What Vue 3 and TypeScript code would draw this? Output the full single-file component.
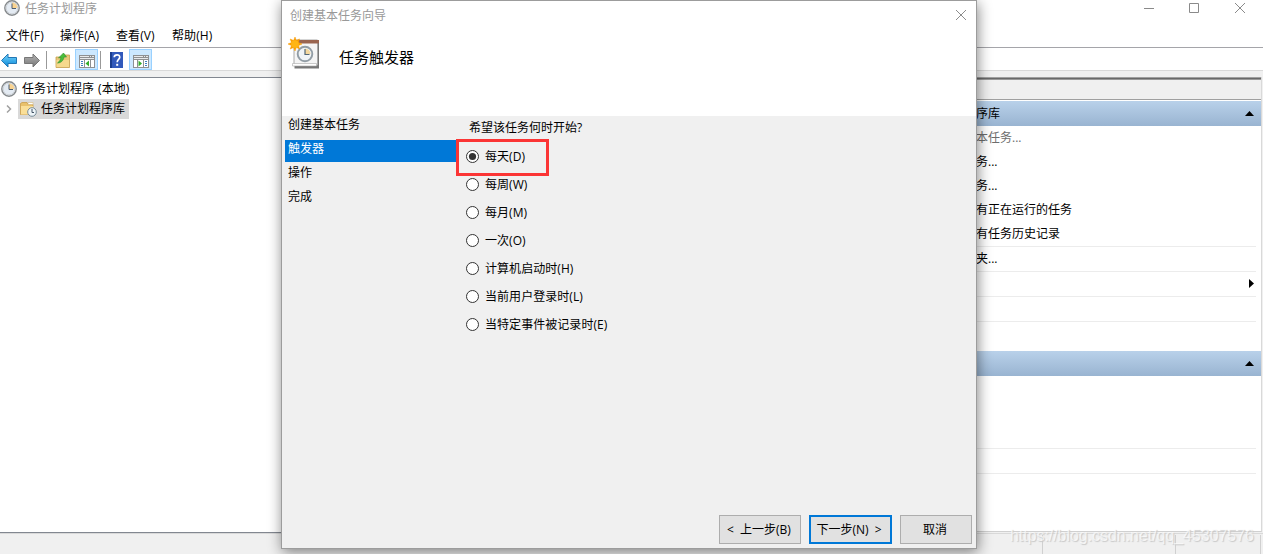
<script setup lang="ts">
import { ref } from 'vue'

interface ActionRow {
  text: string
  dim?: boolean
  line?: boolean
  arrow?: boolean
}

const menus: string[] = ['文件(F)', '操作(A)', '查看(V)', '帮助(H)']
const actions: ActionRow[] = [
  { text: '本任务...', dim: true },
  { text: '务...' },
  { text: '务...' },
  { text: '有正在运行的任务' },
  { text: '有任务历史记录', line: true },
  { text: '夹...', line: true },
  { text: '', line: true, arrow: true },
  { text: '', line: true },
]
const steps: string[] = ['创建基本任务', '触发器', '操作', '完成']
const currentStep = 1
const triggers: string[] = [
  '每天(D)',
  '每周(W)',
  '每月(M)',
  '一次(O)',
  '计算机启动时(H)',
  '当前用户登录时(L)',
  '当特定事件被记录时(E)',
]
const selected = ref(0)
</script>

<template>
  <div class="window">
    <header class="titlebar">
      <svg class="clock" width="16" height="16" viewBox="0 0 16 16">
        <circle cx="8" cy="8" r="7.2" fill="#eef2f6" stroke="#85898c" stroke-width="1.4" />
        <circle cx="8" cy="8" r="5.8" fill="#e4ebf3" stroke="#c3c8ce" stroke-width=".7" />
        <path d="M8 2.500A5.500 5.500 0 0 1 13.500 8H8z" fill="#f9d391" />
        <path d="M8 3.500V8.500H12" fill="none" stroke="#4c5d70" />
      </svg>
      <span class="title">任务计划程序</span>
      <svg class="controls" width="104" height="16" viewBox="0 0 104 16" fill="none" stroke="#8a8a8a">
        <path d="M0 8.500H10M45.500 3.500h9v9h-9zM91 3l10 10M101 3L91 13" />
      </svg>
    </header>
    <nav class="menubar">
      <span v-for="m in menus" :key="m">{{ m }}</span>
    </nav>
    <div class="toolbar">
      <svg class="tool back" width="17" height="16" viewBox="0 0 17 16">
        <defs><linearGradient id="blue" x2="0" y2="1"><stop stop-color="#77d5fb" /><stop offset="1" stop-color="#0786d8" /></linearGradient></defs>
        <path d="M1.500 8.500L8 2V5.500H16.500V11.500H8V15z" fill="url(#blue)" stroke="#2277b5" />
      </svg>
      <svg class="tool forward" width="17" height="16" viewBox="0 0 17 16">
        <defs><linearGradient id="gray" x2="0" y2="1"><stop stop-color="#b5b5b5" /><stop offset="1" stop-color="#757575" /></linearGradient></defs>
        <path d="M15.500 8.500L9 2V5.500H.5V11.500H9V15z" fill="url(#gray)" stroke="#777" />
      </svg>
      <i class="divider"></i>
      <svg class="tool folder-up" width="16" height="16" viewBox="0 0 16 16">
        <path d="M1 5h7l1-2h5.500v12.500H1z" fill="#e8c779" stroke="#c79f4c" stroke-width=".8" />
        <path d="M1.500 8h12.500v7H1.500z" fill="#f6d98d" />
        <path d="M2.500 11C4 10 5.500 8 6 5.500L3.500 6L8.500 1L11.500 5L9 5C8.500 8.500 6 11 2.500 11z" fill="#49bd3b" stroke="#2d8d2b" stroke-width=".6" />
      </svg>
      <span class="toggle">
        <svg width="16" height="13" viewBox="0 0 16 13">
          <path d="M0 0h16v13H0z" fill="#8e9092" /><path d="M1 1h9v1H1zM11 1h1v1h-1zM13 1h2v1h-2zM1 3h14v1H1z" fill="#e8eaec" />
          <path d="M1 5h4v7H1zM6 5h5v7H6zM12 5h3v7h-3z" fill="#fff" />
          <path d="M2 6.500h2M2 8.500h2M2 10.500h2" stroke="#3d80bf" /><path d="M10 5.500v6L6.500 8.500z" fill="#35ad2c" />
        </svg>
      </span>
      <i class="divider second"></i>
      <svg class="tool help" width="13" height="16" viewBox="0 0 13 16">
        <path d="M0 0h13v16H0z" fill="#3159bb" /><path d="M0 0h2v16H0z" fill="#193c8d" />
        <path d="M4.200 5.300C4.400 1.900 10 2 9.700 5.400C9.500 7.500 7.200 7.500 7.200 10.300" fill="none" stroke="#fff" stroke-width="1.700" /><path d="M6.200 11.800h2v2h-2z" fill="#fff" />
      </svg>
      <span class="toggle last">
        <svg width="16" height="13" viewBox="0 0 16 13">
          <path d="M0 0h16v13H0z" fill="#8e9092" /><path d="M1 1h9v1H1zM11 1h1v1h-1zM13 1h2v1h-2zM1 3h14v1H1z" fill="#e8eaec" />
          <path d="M1 5h3v7H1zM5 5h5v7H5zM11 5h4v7h-4z" fill="#fff" />
          <path d="M12 6.500h2M12 8.500h2M12 10.500h2" stroke="#3d80bf" /><path d="M5.500 5.500v6L9 8.500z" fill="#35ad2c" />
        </svg>
      </span>
    </div>

    <main class="workspace">
      <section class="tree">
        <div class="root">
          <svg class="clock" width="16" height="16" viewBox="0 0 16 16">
            <circle cx="8" cy="8" r="7.200" fill="#eef2f6" stroke="#85898c" stroke-width="1.400" />
            <circle cx="8" cy="8" r="5.800" fill="#e4ebf3" stroke="#c3c8ce" stroke-width=".7" />
            <path d="M8 2.500A5.500 5.500 0 0 1 13.500 8H8z" fill="#f9d391" />
            <path d="M8 3.500V8.500H12" fill="none" stroke="#4c5d70" />
          </svg>
          <span>任务计划程序 (本地)</span>
        </div>
        <div class="branch">
          <svg width="7" height="10" viewBox="0 0 7 10" fill="none" stroke="#a0a0a0" stroke-width="1.500"><path d="M1 1.500L4.500 5L1 8.500" /></svg>
          <span class="leaf">
            <svg width="17" height="16" viewBox="0 0 17 16">
              <path d="M.5 2.500L2 1.500h5l1 2h5v10H.5z" fill="#e9c16b" stroke="#c9983d" stroke-width=".7" /><path d="M8 1.500h5v2H8z" fill="#fff" stroke="#d5b36b" stroke-width=".5" />
              <path d="M1 5h12v8.500H1z" fill="#fadf98" /><circle cx="12" cy="11" r="4.300" fill="#edf4f8" stroke="#788c99" /><path d="M12 8v3.500h2" fill="none" stroke="#456" />
            </svg>
            <span>任务计划程序库</span>
          </span>
        </div>
      </section>
      <section class="actions">
        <div class="actions-cap"></div>
        <div class="group"><span>序库</span><svg width="9" height="5" viewBox="0 0 9 5"><path d="M0 5L4.500 0L9 5z" /></svg></div>
        <div v-for="(a, i) in actions" :key="i" class="action" :class="{ dim: a.dim, line: a.line }">
          <span>{{ a.text }}</span>
          <svg v-if="a.arrow" width="5" height="9" viewBox="0 0 5 9"><path d="M0 0L5 4.500L0 9z" /></svg>
        </div>
        <div class="group lower"><span></span><svg width="9" height="5" viewBox="0 0 9 5"><path d="M0 5L4.500 0L9 5z" /></svg></div>
        <div class="blank"></div>
        <div class="action line"></div>
      </section>
    </main>
    <footer class="status"><i></i><i></i><i></i></footer>

    <section class="dialog">
      <div class="dialog-head">
        <div class="dialog-title">
          <span>创建基本任务向导</span>
          <svg width="12" height="12" viewBox="0 0 12 12" fill="none" stroke="#8c8c8c"><path d="M1 1l10 10M11 1L1 11" /></svg>
        </div>
        <div class="heading">
          <svg width="32" height="32" viewBox="0 0 32 32">
            <path d="M6.500 5h24.500v26.500H6.500z" fill="#777" /><path d="M6 3h23.500v25H6z" fill="#f5f5f5" stroke="#aaa" />
            <path d="M7 3h24v3.500H7z" fill="#9a6550" /><path d="M4.500 26.500h24v2.500h-24z" fill="#fff" stroke="#aaa" stroke-width=".6" /><path d="M30.500 6.500v24" stroke="#777" />
            <circle cx="17" cy="17" r="7.300" fill="#f0f4f7" stroke="#929da5" stroke-width="1.900" /><path d="M17 11.500a5.500 5.500 0 0 1 5.500 5.500H17z" fill="#f4d89f" /><path d="M17 12v5.500h4.500" fill="none" stroke="#536776" stroke-width="1.200" />
            <path d="M7 0L8.300 3.500L11.500 1.900L10.400 5.400L14 7L10.500 8.500L11.500 12L8.300 10.300L7 14L5.600 10.500L2.200 12L3.500 8.500L0 7L3.500 5.500L2.200 2L5.600 3.500z" fill="#fa9d00" stroke="#fa9d00" stroke-width=".5" /><circle cx="7" cy="7" r="3.800" fill="#ffb514" />
          </svg>
          <h1>任务触发器</h1>
        </div>
      </div>
      <div class="dialog-body">
        <nav class="steps">
          <div v-for="(s, i) in steps" :key="s" class="step" :class="{ current: i === currentStep }">{{ s }}</div>
        </nav>
        <div class="choices">
          <p>希望该任务何时开始?</p>
          <label v-for="(t, i) in triggers" :key="t" @click="selected = i">
            <svg width="13" height="13" viewBox="0 0 13 13"><circle cx="6.500" cy="6.500" r="6" fill="#fff" stroke="#333" /><circle v-if="selected === i" cx="6.500" cy="6.500" r="3.600" fill="#333" /></svg>
            <span>{{ t }}</span>
          </label>
          <div class="marker"></div>
        </div>
      </div>
      <div class="buttons">
        <button class="previous">&lt; 上一步(B)</button>
        <button class="next">下一步(N) &gt;</button>
        <button class="cancel">取消</button>
      </div>
    </section>
    <div class="watermark">https://blog.csdn.net/qq_45307576</div>
  </div>
</template>

<style>
body { margin: 0; overflow: hidden; }
</style>

<style scoped>
* { box-sizing: border-box; }
.window { position: relative; width: 1263px; height: 554px; overflow: hidden; background: #fff; color: #000; font: 12px/16px "Open Sans", "Noto Sans CJK SC", sans-serif; }
svg { display: block; flex: none; }
span { white-space: nowrap; }
.titlebar { height: 26px; display: flex; align-items: flex-start; padding-left: 4px; }
.title { margin: 1px 0 0 5px; color: #999; }
.controls { margin-left: auto; margin-right: 15px; }
.menubar { height: 22px; display: flex; gap: 16px; padding: 2px 0 0 6px; letter-spacing: .1px; border-bottom: 1px solid #a5a5aa; }
.menubar span { min-width: 40px; }
.menubar span:first-child { width: 38px; min-width: 38px; }
.toolbar { height: 23px; display: flex; align-items: flex-start; border-bottom: 1px solid #d9d9d9; }
.tool { margin-top: 4px; }
.back { margin-left: 0; }
.forward { margin-left: 7px; }
.divider { width: 1px; height: 18px; margin: 3px 0 0 5px; background: #999; }
.folder-up { margin-left: 8px; }
.toggle { width: 23px; height: 21px; margin: 1px 0 0 4px; padding: 5px 3px; border: 1px solid #99d1ff; background: #cce8ff; }
.divider.second { margin-left: 2px; }
.help { margin-left: 9px; }
.toggle.last { margin-left: 6px; }
.workspace { display: flex; justify-content: space-between; height: 462px; padding-top: 6px; background: #f0f0f0; }
.tree { width: 700px; height: 456px; background: #fff; border-top: 1px solid #828790; border-bottom: 1px solid #828790; padding-top: 2px; }
.root { height: 18px; display: flex; align-items: center; gap: 5px; padding-left: 1px; word-spacing: 1px; }
.branch { height: 21px; display: flex; align-items: center; padding: 1px 0 0 6px; }
.leaf { width: 111px; height: 20px; margin-left: 5px; padding-left: 2px; display: flex; align-items: center; gap: 4px; background: #d9d9d9; }
.actions { width: 287px; height: 455px; background: #fff; border-right: 1px solid #d9d9d9; border-bottom: 1px solid #d0d0d0; margin-right: 1px; }
.actions-cap { height: 23px; margin-bottom: 1px; border-bottom: 1px solid #a0a0a0; background: linear-gradient(#a0a0a0 1px, #696969 1px 2px, #999 2px 3px, #f0f0f0 3px); }
.group { height: 25px; display: flex; justify-content: space-between; align-items: center; padding-left: 1px; padding-right: 7px; background: linear-gradient(#b9d1ea, #99b4d1); }
.action { height: 24px; margin-right: 5px; padding-left: 1px; padding-right: 2px; display: flex; align-items: center; justify-content: space-between; }
.action svg { margin-bottom: 1px; }
.action.line { height: 25px; border-bottom: 1px solid #ececec; }
.action.dim { color: #6d6d6d; }
.lower { margin-top: 29px; }
.blank { height: 73px; margin-right: 5px; border-bottom: 1px solid #ececec; }
.status { height: 21px; display: flex; padding-top: 1px; background: #f0f0f0; border-top: 1px solid #d9d9d9; }
.status i { width: 133px; border-right: 1px solid #d0d0d0; }
.status i:first-child { width: 1043px; }
.status i:last-child { width: 85px; }
.dialog { position: absolute; left: 281px; top: 0; width: 696px; height: 549px; display: flex; flex-direction: column; border: 1px solid #9c9c9c; background: #f0f0f0; box-shadow: 1px 3px 13px rgba(0, 0, 0, .48); }
.dialog-head { height: 115px; background: #fff; }
.dialog-title { height: 36px; display: flex; align-items: flex-start; justify-content: space-between; padding: 7px 9px 0 8px; color: #999; }
.dialog-title svg { margin-top: 1px; }
.heading { display: flex; padding-left: 6px; }
h1 { margin: 10px 0 0 19px; font-weight: 400; font-size: 15px; line-height: 20px; }
.dialog-body { height: 399px; display: flex; }
.steps { width: 174px; padding-left: 3px; }
.step { height: 22px; margin-bottom: 2px; padding: 1px 0 0 3px; }
.step.current { background: #0078d7; color: #fff; }
.choices { position: relative; padding: 4px 0 0 10px; }
.choices p { margin: 0 0 6px 3px; }
.choices label { height: 28px; display: flex; align-items: center; gap: 6px; }
.choices label span { padding-top: 2px; letter-spacing: .05px; }
.marker { position: absolute; left: 0; top: 23px; width: 93px; height: 37px; border: 3px solid #fb3535; }
.buttons { display: flex; padding-left: 437px; gap: 8px; }
button { height: 29px; padding: 0; border: 1px solid #adadad; background: #e1e1e1; font: inherit; color: #000; word-spacing: 3px; }
.previous { width: 82px; padding-right: 2px; }
.next { width: 83px; padding-right: 3px; border: 2px solid #0078d7; }
.cancel { width: 72px; padding-right: 2px; }
.watermark { position: absolute; left: 1010px; top: 526px; font: 16px/20px "Liberation Sans", sans-serif; letter-spacing: -.05px; color: rgba(255, 255, 255, .65); text-shadow: 1px 1px 1px #c8c8c8; }
</style>
